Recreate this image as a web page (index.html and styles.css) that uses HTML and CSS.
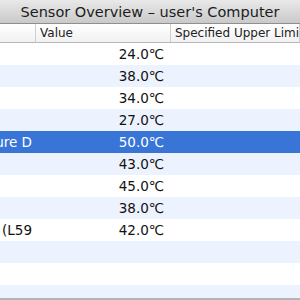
FILE: index.html
```html
<!DOCTYPE html>
<html lang="en">
<head>
    <meta charset="UTF-8">
    <title>Sensor Overview</title>
    <link rel="stylesheet" href="styles.css">
</head>
<body>
    <div class="window">
        <div class="titlebar">Sensor Overview – user's Computer</div>
        <div class="table">
            <div class="row head">
                <div class="cell name"></div>
                <div class="cell value">Value</div>
                <div class="cell limit">Specified Upper Limit</div>
            </div>
            <div class="row"><div class="cell name"></div><div class="cell value">24.0℃</div><div class="cell limit"></div></div>
            <div class="row alt"><div class="cell name"></div><div class="cell value">38.0℃</div><div class="cell limit"></div></div>
            <div class="row"><div class="cell name"></div><div class="cell value">34.0℃</div><div class="cell limit"></div></div>
            <div class="row alt"><div class="cell name"></div><div class="cell value">27.0℃</div><div class="cell limit"></div></div>
            <div class="row selected"><div class="cell name"><span>CPU Core Temperature D</span></div><div class="cell value">50.0℃</div><div class="cell limit"></div></div>
            <div class="row alt"><div class="cell name"></div><div class="cell value">43.0℃</div><div class="cell limit"></div></div>
            <div class="row"><div class="cell name"></div><div class="cell value">45.0℃</div><div class="cell limit"></div></div>
            <div class="row alt"><div class="cell name"></div><div class="cell value">38.0℃</div><div class="cell limit"></div></div>
            <div class="row"><div class="cell name"><span>Memory Module (L59</span></div><div class="cell value">42.0℃</div><div class="cell limit"></div></div>
            <div class="row alt"><div class="cell name"></div><div class="cell value"></div><div class="cell limit"></div></div>
            <div class="row"><div class="cell name"></div><div class="cell value"></div><div class="cell limit"></div></div>
            <div class="row alt"><div class="cell name"></div><div class="cell value"></div><div class="cell limit"></div></div>
        </div>
    </div>
</body>
</html>
```

FILE: styles.css
```css
body {
    margin: 0;
    font-family: "DejaVu Sans", "Liberation Sans", sans-serif;
    background-color: #ffffff;
    overflow: hidden;
}
.window {
    width: 300px;
    height: 300px;
    display: flex;
    flex-direction: column;
    overflow: hidden;
}
.titlebar {
    height: 23px;
    flex: none;
    border-bottom: 1px solid #8f8f8f;
    background: linear-gradient(#e9e9e9, #c9c9c9);
    color: #1c1c1c;
    font-size: 14.5px;
    line-height: 24px;
    text-align: center;
    white-space: nowrap;
}
.table {
    flex: 1;
    overflow: hidden;
    border-bottom: 2px solid #b4b4b4;
}
.row {
    display: flex;
    height: 22px;
    line-height: 22px;
    font-size: 13.5px;
    color: #111;
}
.row.alt {
    background-color: #edf3fe;
}
.row.selected {
    background-color: #3875d7;
    color: #fff;
}
.cell {
    white-space: nowrap;
    overflow: hidden;
    flex: none;
}
.name {
    width: 36px;
    display: flex;
    justify-content: flex-end;
    padding-right: 4px;
    box-sizing: border-box;
}
.value {
    width: 134px;
    text-align: right;
    padding-right: 6px;
    box-sizing: border-box;
}
.limit {
    flex: 1;
    padding-left: 4px;
}
.row.head {
    height: 18px;
    line-height: 18px;
    font-size: 12px;
    color: #222;
    background: linear-gradient(#ffffff, #f1f1f1);
    border-bottom: 1px solid #b8b8b8;
}
.head .cell {
    border-right: 1px solid #cfcfcf;
}
.head .value {
    width: 135px;
    text-align: left;
    padding-left: 4px;
}
```
